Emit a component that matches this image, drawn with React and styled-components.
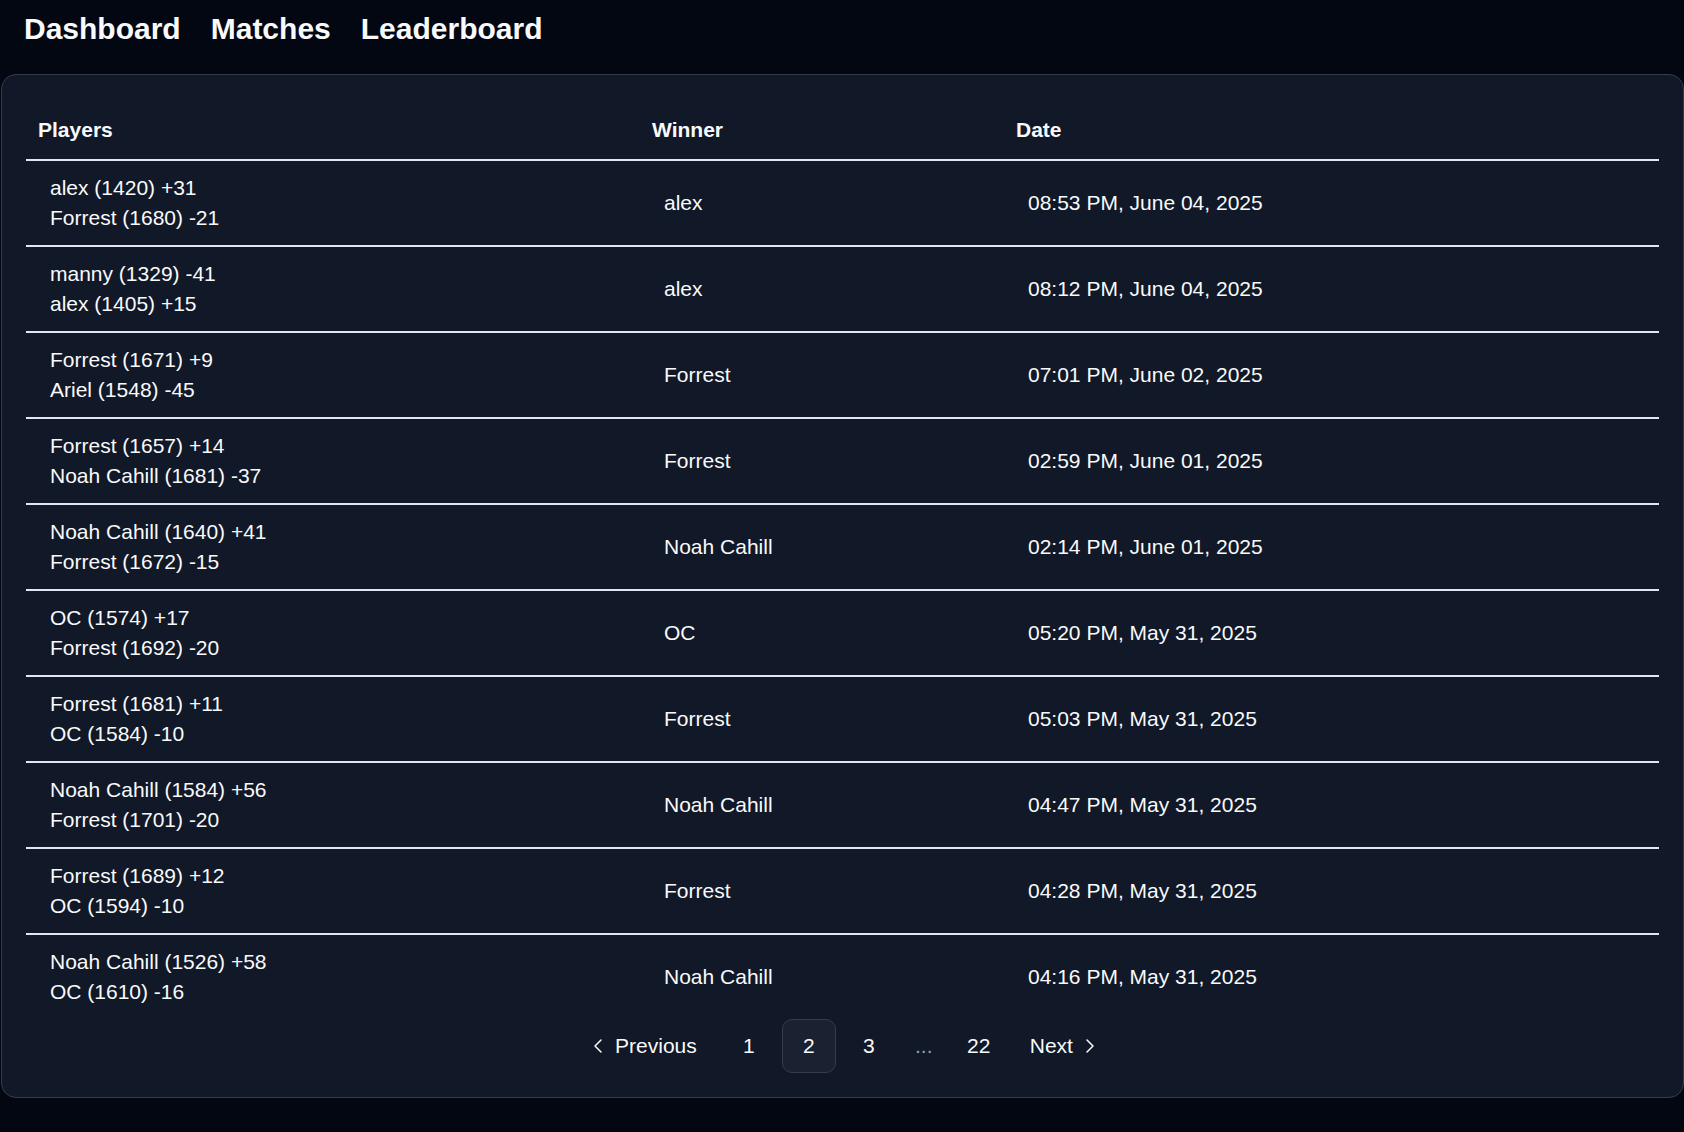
import * as React from "react"
import styled, { createGlobalStyle } from "styled-components"
import { ChevronLeft, ChevronRight } from "lucide-react"

const GlobalStyle = createGlobalStyle`
  html, body {
    margin: 0;
    padding: 0;
    background-color: #030712;
    color: #f9fafb;
    font-family: "Liberation Sans", Arial, sans-serif;
  }
  * { box-sizing: border-box; }
`

const Page = styled.div`
  min-height: 1132px;
  background-color: #030712;
`

const Nav = styled.nav`
  display: flex;
  gap: 30px;
  height: 74px;
  padding: 6px 24px 0;
`

const NavLink = styled.a`
  font-size: 30px;
  line-height: 45px;
  font-weight: 700;
  color: #f9fafb;
  text-decoration: none;
  cursor: pointer;
`

const Card = styled.section`
  margin-left: 1px;
  background-color: #111827;
  border: 1px solid #353c4b;
  border-radius: 15px;
  padding: 24px;
`

const Row = styled.div`
  display: grid;
  grid-template-columns: 614px 364px 1fr;
  align-items: center;
  border-bottom: ${p => (p.$last ? "none" : "2px solid #e2e6f0")};
`

const HeadRow = styled(Row)`
  height: 62px;
  padding-top: 2px;
`

const HeadCell = styled.div`
  padding: 0 12px;
  font-size: 21px;
  font-weight: 700;
  line-height: 30px;
`

const Cell = styled.div`
  padding: 12px 24px;
  font-size: 21px;
  line-height: 30px;
`

const Pager = styled.nav`
  display: flex;
  justify-content: center;
  align-items: center;
  gap: 6px;
  height: 54px;
  font-size: 21px;
`

const PageButton = styled.button`
  display: flex;
  align-items: center;
  justify-content: center;
  gap: 5px;
  height: 54px;
  min-width: 54px;
  padding: ${p => p.$pad || "0"};
  background-color: ${p => (p.$active ? "#1a2130" : "transparent")};
  border: 1.5px solid ${p => (p.$active ? "#353c4b" : "transparent")};
  border-radius: 10px;
  color: #f9fafb;
  font-family: inherit;
  font-size: 21px;
  font-weight: 500;
  cursor: pointer;

  svg {
    flex-shrink: 0;
  }
`

const Ellipsis = styled.span`
  width: 44px;
  text-align: center;
  color: #9ca3af;
  font-size: 21px;
`

const matches = [
  ["alex (1420) +31", "Forrest (1680) -21", "alex", "08:53 PM, June 04, 2025"],
  ["manny (1329) -41", "alex (1405) +15", "alex", "08:12 PM, June 04, 2025"],
  ["Forrest (1671) +9", "Ariel (1548) -45", "Forrest", "07:01 PM, June 02, 2025"],
  ["Forrest (1657) +14", "Noah Cahill (1681) -37", "Forrest", "02:59 PM, June 01, 2025"],
  ["Noah Cahill (1640) +41", "Forrest (1672) -15", "Noah Cahill", "02:14 PM, June 01, 2025"],
  ["OC (1574) +17", "Forrest (1692) -20", "OC", "05:20 PM, May 31, 2025"],
  ["Forrest (1681) +11", "OC (1584) -10", "Forrest", "05:03 PM, May 31, 2025"],
  ["Noah Cahill (1584) +56", "Forrest (1701) -20", "Noah Cahill", "04:47 PM, May 31, 2025"],
  ["Forrest (1689) +12", "OC (1594) -10", "Forrest", "04:28 PM, May 31, 2025"],
  ["Noah Cahill (1526) +58", "OC (1610) -16", "Noah Cahill", "04:16 PM, May 31, 2025"],
]

const App = () => (
  <Page>
    <GlobalStyle />
    <Nav>
      <NavLink>Dashboard</NavLink>
      <NavLink>Matches</NavLink>
      <NavLink>Leaderboard</NavLink>
    </Nav>
    <Card>
      <HeadRow>
        <HeadCell>Players</HeadCell>
        <HeadCell>Winner</HeadCell>
        <HeadCell>Date</HeadCell>
      </HeadRow>
      {matches.map((m, i) => (
        <Row key={i} $last={i === matches.length - 1}>
          <Cell>
            <div>{m[0]}</div>
            <div>{m[1]}</div>
          </Cell>
          <Cell>{m[2]}</Cell>
          <Cell>{m[3]}</Cell>
        </Row>
      ))}
      <Pager>
        <PageButton $pad="0 18px 0 18px">
          <ChevronLeft size={24} strokeWidth={1.5} />
          Previous
        </PageButton>
        <PageButton>1</PageButton>
        <PageButton $active>2</PageButton>
        <PageButton>3</PageButton>
        <Ellipsis>...</Ellipsis>
        <PageButton>22</PageButton>
        <PageButton $pad="0 15px 0 17px">
          Next
          <ChevronRight size={24} strokeWidth={1.5} />
        </PageButton>
      </Pager>
    </Card>
  </Page>
)

export default App
